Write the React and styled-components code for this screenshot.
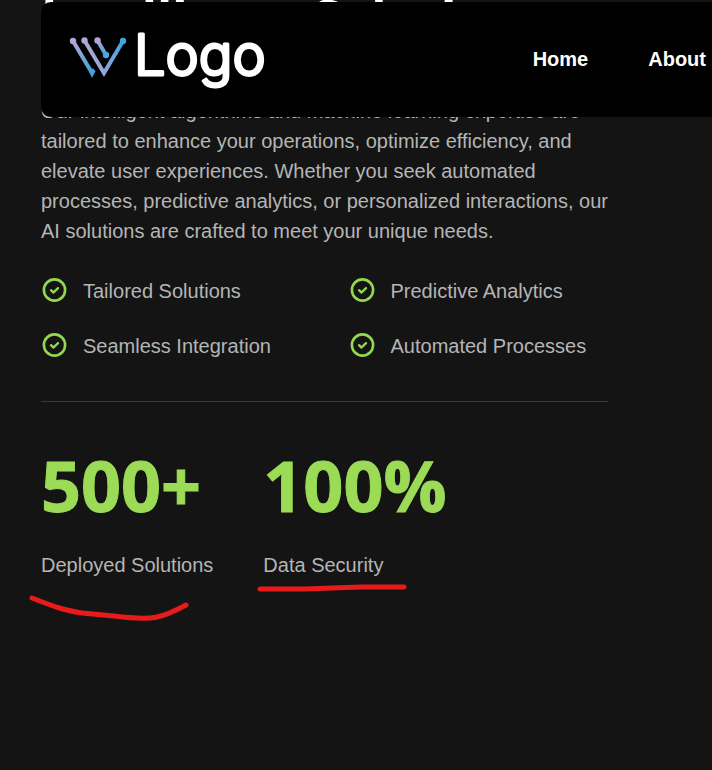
import React from "react";
import styled, { createGlobalStyle } from "styled-components";

const GlobalStyle = createGlobalStyle`
  *, *::before, *::after { box-sizing: border-box; }
  body {
    margin: 0;
    background: #141414;
    color: #b5b5b5;
    font: 400 20px/30px "Liberation Sans", Arial, sans-serif;
    overflow-x: hidden;
  }
`;

const Page = styled.div`
  min-height: 100vh;
  overflow: hidden;
`;

const Header = styled.header`
  position: fixed;
  z-index: 2;
  top: 2px;
  left: 41px;
  right: 0;
  height: 115px;
  padding: 0 6px 2px 28px;
  display: flex;
  align-items: center;
  justify-content: space-between;
  background: #000;
  border-radius: 10px 0 0 10px;
`;

const Brand = styled.a`
  display: flex;
  color: #fff;
  text-decoration: none;
`;

const BrandArt = styled.svg`
  display: block;
  width: 204px;
  height: 64px;
  overflow: visible;
`;

const Wordmark = styled.text`
  font: 350 56px Inter, sans-serif;
  fill: #fff;
  stroke: #fff;
  stroke-width: 3px;
  stroke-linejoin: round;
`;

const Nav = styled.nav`
  display: flex;
  gap: 60px;
`;

const NavLink = styled.a`
  color: #fff;
  font-weight: 700;
  text-decoration: none;
`;

const Content = styled.main`
  padding: 0 104px 40px 41px;
`;

const Title = styled.h1`
  margin: -18px 0 44px;
  color: #fff;
  font: 700 50px/70px "Open Sans", "Noto Sans", sans-serif;
  white-space: nowrap;
`;

const Intro = styled.p`
  margin: 0;
`;

const Features = styled.ul`
  list-style: none;
  margin: 30px 0 0;
  padding: 0 0 40px;
  display: grid;
  grid-template-columns: 1fr 1fr;
  gap: 25px 48px;
  border-bottom: 1px solid #3a3a3a;
`;

const Feature = styled.li`
  display: flex;
  align-items: center;
  gap: 14px;
  white-space: nowrap;
`;

const CheckIcon = styled.svg`
  flex: none;
  width: 28px;
  height: 28px;
  fill: none;
  stroke: #92d94f;
  stroke-linecap: round;
  stroke-linejoin: round;
`;

const Stats = styled.div`
  display: flex;
  gap: 50px;
  margin-top: 48px;
`;

const Stat = styled.div`
  position: relative;
`;

const StatValue = styled.div`
  color: #9bdb56;
  font: 700 70px/70px "Open Sans", "Noto Sans", sans-serif;
  -webkit-text-stroke: 1px #9bdb56;
`;

const StatLabel = styled.div`
  margin-top: 30px;
`;

const Stroke = styled.svg`
  position: absolute;
  left: -12px;
  top: 100%;
  width: 160px;
  height: 50px;
  fill: none;
  stroke: #e81b1b;
  stroke-width: 5px;
  stroke-linecap: round;
  stroke-linejoin: round;
`;

const features = [
  "Tailored Solutions",
  "Predictive Analytics",
  "Seamless Integration",
  "Automated Processes",
];

const stats = [
  {
    value: "500+",
    label: "Deployed Solutions",
    stroke: "M3 18C26 27 34 30 53 33L85 36C125 41 133 38 157 25",
  },
  {
    value: "100%",
    label: "Data Security",
    stroke: "M9 9H53L110 7H153",
  },
];

function Logo() {
  return (
    <BrandArt viewBox="0 0 204 64" role="img" aria-label="Logo">
      <defs>
        <linearGradient id="left" gradientUnits="userSpaceOnUse" x1="4" y1="12" x2="24" y2="44">
          <stop offset="0.1" stopColor="#b5a5d5" />
          <stop offset="1" stopColor="#3fa4df" />
        </linearGradient>
        <linearGradient id="middle" gradientUnits="userSpaceOnUse" x1="20" y1="30" x2="56" y2="20">
          <stop offset="0" stopColor="#b5a5d5" />
          <stop offset="1" stopColor="#3fa4df" />
        </linearGradient>
        <linearGradient id="short" gradientUnits="userSpaceOnUse" x1="29" y1="12" x2="37" y2="27">
          <stop offset="0" stopColor="#b5a5d5" />
          <stop offset="1" stopColor="#3fa4df" />
        </linearGradient>
      </defs>
      <g fill="none" strokeWidth="4">
        <path d="M4 14L23 46" stroke="url(#left)" />
        <path d="M15.500 13.500L35 46L54 14" stroke="url(#middle)" />
        <path d="M28.500 13.500L37 28" stroke="url(#short)" />
      </g>
      <circle cx="4" cy="14" r="3.200" fill="#b5a5d5" />
      <circle cx="15.500" cy="13.500" r="3.200" fill="#b5a5d5" />
      <circle cx="28.500" cy="13.500" r="3.200" fill="#b5a5d5" />
      <circle cx="37" cy="28" r="3.200" fill="#4ba5dd" />
      <circle cx="54" cy="14" r="3.200" fill="#3fa4df" />
      <path d="M19 42L24 41.500L26.500 44L23 51Z" fill="#3fa4df" />
      <Wordmark x="65" y="48">Logo</Wordmark>
    </BrandArt>
  );
}

function Check() {
  return (
    <CheckIcon viewBox="0 0 28 28" aria-hidden="true">
      <circle cx="13.500" cy="13" r="10.600" strokeWidth="2.600" />
      <path d="M10 13.200L12.500 15.500L17 11.200" strokeWidth="2.400" />
    </CheckIcon>
  );
}

export default function App() {
  return (
    <Page>
      <GlobalStyle />
      <Header>
        <Brand href="#">
          <Logo />
        </Brand>
        <Nav>
          <NavLink href="#home">Home</NavLink>
          <NavLink href="#about">About</NavLink>
        </Nav>
      </Header>
      <Content>
        <Title>Intelligent Solutions</Title>
        <Intro>
          Our intelligent algorithms and machine learning expertise are tailored to enhance your
          operations, optimize efficiency, and elevate user experiences. Whether you seek automated
          processes, predictive analytics, or personalized interactions, our AI solutions are
          crafted to meet your unique needs.
        </Intro>
        <Features>
          {features.map((name) => (
            <Feature key={name}>
              <Check />
              {name}
            </Feature>
          ))}
        </Features>
        <Stats>
          {stats.map((stat) => (
            <Stat key={stat.label}>
              <StatValue>{stat.value}</StatValue>
              <StatLabel>{stat.label}</StatLabel>
              <Stroke viewBox="0 0 160 50" aria-hidden="true">
                <path d={stat.stroke} />
              </Stroke>
            </Stat>
          ))}
        </Stats>
      </Content>
    </Page>
  );
}
